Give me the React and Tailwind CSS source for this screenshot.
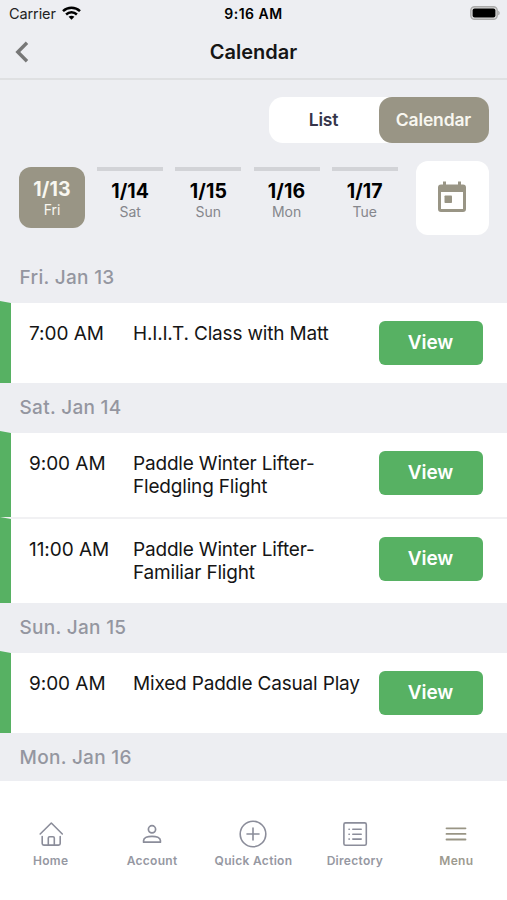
import { useState } from 'react';
import clsx from 'clsx';

const days = [
  { date: '1/13', day: 'Fri' },
  { date: '1/14', day: 'Sat' },
  { date: '1/15', day: 'Sun' },
  { date: '1/16', day: 'Mon' },
  { date: '1/17', day: 'Tue' },
];

const sections = [
  { title: 'Fri. Jan 13', events: [{ time: '7:00 AM', lines: ['H.I.I.T. Class with Matt'] }] },
  {
    title: 'Sat. Jan 14',
    events: [
      { time: '9:00 AM', lines: ['Paddle Winter Lifter-', 'Fledgling Flight'] },
      { time: '11:00 AM', lines: ['Paddle Winter Lifter-', 'Familiar Flight'] },
    ],
  },
  { title: 'Sun. Jan 15', events: [{ time: '9:00 AM', lines: ['Mixed Paddle Casual Play'] }] },
  { title: 'Mon. Jan 16', events: [] },
];

const StatusBar = () => (
  <div className="h-[27px] flex items-center justify-between pl-[9px] pr-[7px] text-black">
    <div className="w-[119px] flex items-center gap-[6px]">
      <span className="text-[14.5px] tracking-[-0.1px] text-[#222]">Carrier</span>
      <svg className="w-[19px] h-[14px] -mt-[1px]" viewBox="0 0 19 14" fill="none" stroke="#000" strokeWidth="2.5">
        <path d="M1 5.2C5.8.7 13.2.7 18 5.2" />
        <path d="M4.1 8.5c3.1-2.9 7.7-2.9 10.8 0" />
        <path d="M9.5 13.7 6.6 10.8c1.7-1.5 4.1-1.5 5.8 0z" fill="#000" stroke="none" />
      </svg>
    </div>
    <span className="text-[14px] font-semibold tracking-[0.5px]">9:16 AM</span>
    <div className="w-[121px] flex justify-end">
      <svg className="w-[30px] h-[14px] -mt-[1px]" viewBox="0 0 30 14">
        <rect x="0.8" y="0.7" width="26.4" height="12.6" rx="3.8" fill="#ddd" stroke="#aaa" strokeWidth="1.4" />
        <rect x="2.6" y="2.4" width="22.8" height="9.2" rx="2" fill="#000" />
        <path d="M28.2 4.7c2 .6 2 4 0 4.6z" fill="#aaa" />
      </svg>
    </div>
  </div>
);

const rowHeight = (lines, last) => {
  if (!last) return 'h-[86px] border-b-2 border-[#f1f1f3]';
  return lines.length > 1 ? 'h-[84px]' : 'h-[80px]';
};

const EventRow = ({ time, lines, last }) => (
  <div className={clsx('relative flex bg-white pl-[29px] pr-[24.5px]', rowHeight(lines, last))}>
    {/* colored edge, slanted a little at the top */}
    <div className="absolute left-0 -top-[2px] bottom-0 w-[11px] bg-[#57b163] [clip-path:polygon(0_0,100%_2px,100%_100%,0_100%)]" />
    <div className="w-[104px] pt-[19px] text-[19px] leading-[23px] tracking-[-0.05px]">{time}</div>
    <div className="flex-1 pt-[19px] text-[19px] leading-[23px] tracking-[-0.18px] whitespace-nowrap">
      {lines.map((line) => (
        <div key={line}>{line}</div>
      ))}
    </div>
    <button className="mt-[18px] w-[104px] h-[44px] shrink-0 rounded-[6px] bg-[#57b163] text-white text-[19px] font-semibold tracking-[-0.1px]">
      View
    </button>
  </div>
);

const HomeIcon = () => (
  <svg className="w-[24px] h-[26px]" viewBox="0 0 24 26" fill="none" stroke="#8b8d9a" strokeWidth="1.6" strokeLinecap="round" strokeLinejoin="round">
    <path d="M1.2 13 12.300 2l11 11" />
    <path d="M3.200 15.500v7a1.600 1.600 0 0 0 1.600 1.600h14.800a1.600 1.600 0 0 0 1.600-1.600v-7" />
    <path d="M9.300 24v-7a1.300 1.300 0 0 1 1.300-1.300h3.400a1.300 1.300 0 0 1 1.300 1.300v7" />
  </svg>
);

const AccountIcon = () => (
  <svg className="w-[20px] h-[26px]" viewBox="0 0 20 26" fill="none" stroke="#8b8d9a" strokeWidth="1.7" strokeLinejoin="round">
    <circle cx="10" cy="8.3" r="3.6" />
    <path d="M1.6 21.2v-1.7c0-5.6 16.8-5.6 16.8 0v1.7z" />
  </svg>
);

const QuickIcon = () => (
  <svg className="w-[28px] h-[28px]" viewBox="0 0 28 28" fill="none" stroke="#8b8d9a" strokeWidth="1.6" strokeLinecap="round">
    <circle cx="14" cy="14" r="12.8" />
    <path d="M14 8v12M8 14h12" />
  </svg>
);

const DirectoryIcon = () => (
  <svg className="w-[26px] h-[26px]" viewBox="0 0 26 26" fill="none" stroke="#8b8d9a" strokeWidth="1.6" strokeLinecap="round">
    <rect x="1.9" y="1.9" width="22.4" height="22.4" rx="1.6" />
    <path d="M10.8 8.3h8.4M10.8 13.2h8.4M10.8 18.1h8.4M7 8.3h.3M7 13.2h.3M7 18.1h.3" />
  </svg>
);

const MenuIcon = () => (
  <svg className="w-[22px] h-[26px]" viewBox="0 0 22 26" fill="none" stroke="#999585" strokeWidth="1.8" strokeLinecap="round">
    <path d="M1.5 7.3h19M1.5 12.9h19M1.5 18.5h19" />
  </svg>
);

const tabs = [
  { label: 'Home', Icon: HomeIcon },
  { label: 'Account', Icon: AccountIcon },
  { label: 'Quick Action', Icon: QuickIcon },
  { label: 'Directory', Icon: DirectoryIcon },
  { label: 'Menu', Icon: MenuIcon },
];

const App = () => {
  const [selected, setSelected] = useState('1/13');

  return (
    <div className="w-[507px] h-[900px] overflow-hidden bg-[#edeef2] text-[#151515] font-['Inter',sans-serif]">
      <StatusBar />

      <header className="h-[53px] flex items-center px-[15px] border-b-2 border-[#dfe0e2]">
        <svg className="w-[14px] h-[22px] -mt-[1px]" viewBox="0 0 14 22" fill="none" stroke="#777" strokeWidth="3.4">
          <path d="M12 1.8 2.8 11l9.2 9.2" />
        </svg>
        <h1 className="flex-1 -mt-[1px] pr-[14px] text-center text-[20px] font-semibold">Calendar</h1>
      </header>

      <div className="flex justify-end pt-[17px] pr-[18.5px]">
        <div className="flex w-[220px] h-[46px] rounded-[14px] bg-white text-[17.5px] font-semibold tracking-[-0.15px]">
          <button className="w-[110px] text-[#35354a]">List</button>
          <button className="w-[110px] rounded-[13px] bg-[#999585] text-[#f8f7f0]">Calendar</button>
        </div>
      </div>

      <div className="flex justify-between pl-[19px] pr-[18.5px] pt-[18px]">
        <div className="flex gap-[12.2px] pt-[6px]">
          {days.map(({ date, day }) => (
            <button
              key={date}
              onClick={() => setSelected(date)}
              className={clsx(
                'w-[66px] h-[61px] flex flex-col items-center',
                selected === date
                  ? 'rounded-[12px] bg-[#999585] text-[#f8f7f0] pt-[10px]'
                  : 'border-t-4 border-[#d2d3d7] text-black pt-[8px]'
              )}
            >
              <span className="text-[19.5px] leading-[24px] font-bold tracking-[0.1px]">{date}</span>
              <span className={clsx('text-[14px] leading-[18px]', selected !== date && 'text-[#85868c]')}>{day}</span>
            </button>
          ))}
        </div>
        <button className="w-[73px] h-[74px] flex items-center justify-center rounded-[12px] bg-white">
          <svg className="w-[28px] h-[32px] -mt-[3px]" viewBox="0 0 28 32" fill="#999585">
            <path fillRule="evenodd" d="M5 .5h3v3h12v-3h3v3h2a3 3 0 0 1 3 3V28a3 3 0 0 1-3 3H3a3 3 0 0 1-3-3V6.500a3 3 0 0 1 3-3h2zM3 11v17h22V11z" />
            <rect x="6.500" y="14.500" width="7.500" height="7.500" rx="0.800" />
          </svg>
        </button>
      </div>

      <main className="mt-[18px]">
        {sections.map(({ title, events }) => (
          <section key={title}>
            <h2
              className={clsx(
                'pl-[19.500px] text-[19px] leading-[49px] font-medium tracking-[0.3px] text-[#9496a0]',
                events.length ? 'h-[50px]' : 'h-[48px]'
              )}
            >
              {title}
            </h2>
            {events.map((event, i) => (
              <EventRow key={event.time} {...event} last={i === events.length - 1} />
            ))}
          </section>
        ))}
      </main>

      <nav className="h-[120px] bg-white grid grid-cols-5 pt-[39px]">
        {tabs.map(({ label, Icon }) => (
          <button key={label} className="flex flex-col items-center justify-start">
            <span className="h-[28px] flex items-center">
              <Icon />
            </span>
            <span className={clsx('mt-[4px] text-[12px] leading-[18px] font-semibold tracking-[0.3px] whitespace-nowrap', label === 'Menu' ? 'text-[#9d9a8f]' : 'text-[#9698a2]')}>
              {label}
            </span>
          </button>
        ))}
      </nav>
    </div>
  );
};

export default App;
